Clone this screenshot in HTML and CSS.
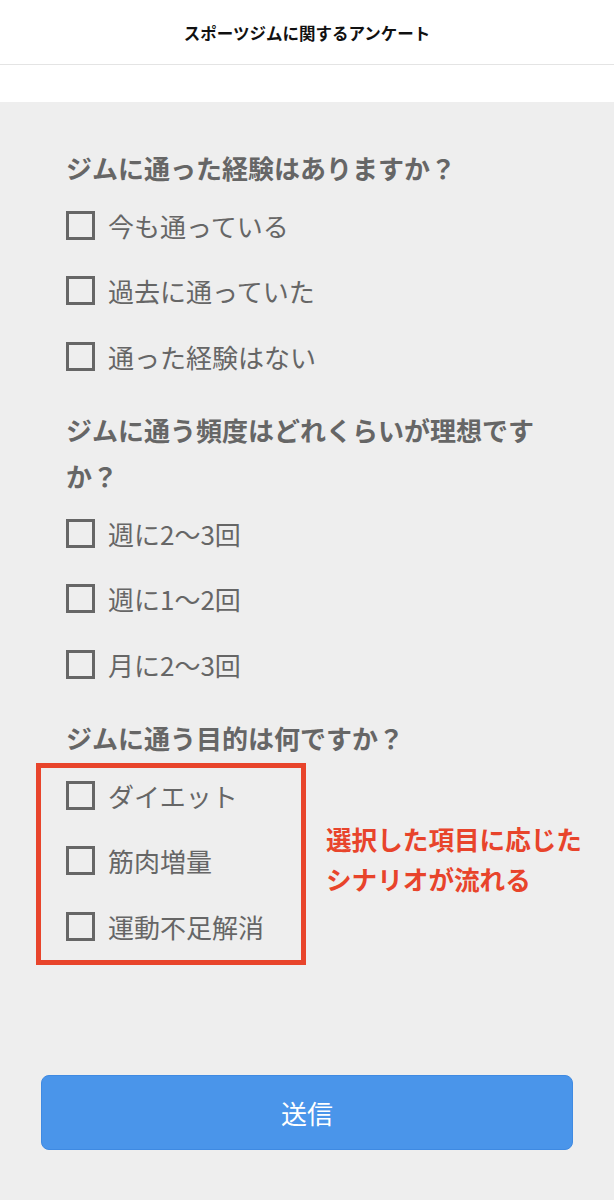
FILE: index.html
```html
<!DOCTYPE html>
<html lang="ja">
  <head>
    <meta charset="UTF-8" />
    <meta name="viewport" content="width=device-width, initial-scale=1.0" />
    <title>スポーツジムに関するアンケート</title>
    <link rel="stylesheet" href="styles.css">
  </head>

  <body>
    <div class="header">スポーツジムに関するアンケート</div>
    <div class="spacer"></div>

    <form class="survey">
      <div class="question">
        <p class="label">ジムに通った経験はありますか？</p>
        <div class="options">
          <label class="option"><input type="checkbox"><span class="box"></span>今も通っている</label>
          <label class="option"><input type="checkbox"><span class="box"></span>過去に通っていた</label>
          <label class="option"><input type="checkbox"><span class="box"></span>通った経験はない</label>
        </div>
      </div>

      <div class="question">
        <p class="label">ジムに通う頻度はどれくらいが理想ですか？</p>
        <div class="options">
          <label class="option"><input type="checkbox"><span class="box"></span>週に2〜3回</label>
          <label class="option"><input type="checkbox"><span class="box"></span>週に1〜2回</label>
          <label class="option"><input type="checkbox"><span class="box"></span>月に2〜3回</label>
        </div>
      </div>

      <div class="question">
        <p class="label">ジムに通う目的は何ですか？</p>
        <div class="options highlight">
          <label class="option"><input type="checkbox"><span class="box"></span>ダイエット</label>
          <label class="option"><input type="checkbox"><span class="box"></span>筋肉増量</label>
          <label class="option"><input type="checkbox"><span class="box"></span>運動不足解消</label>
          <div class="note">選択した項目に応じた<br>シナリオが流れる</div>
        </div>
      </div>

      <div class="actions">
        <button type="button" class="submit">送信</button>
      </div>
    </form>
  </body>
</html>
```

FILE: styles.css
```css
body {
  margin: 0;
  background: #eeeeee;
  font-family: "Noto Sans CJK JP", "Noto Sans", sans-serif;
  color: #666666;
}

.header {
  height: 64px;
  line-height: 66px;
  background: white;
  border-bottom: 1px solid #e4e4e4;
  text-align: center;
  font-size: 16.5px;
  font-weight: bold;
  color: #111111;
}

.spacer {
  height: 37px;
  background: white;
}

.survey {
  padding: 15px 66px 50px;
}

.question {
  margin-top: 28px;
}

.label {
  margin: 0 0 11px;
  font-size: 26px;
  line-height: 46px;
  font-weight: bold;
}

.options {
  display: flex;
  flex-direction: column;
  gap: 19.5px;
}

.option {
  display: flex;
  align-items: center;
  height: 46px;
  font-size: 26px;
}

.option input {
  display: none;
}

.box {
  width: 23px;
  height: 23px;
  border: 3px solid #666666;
  margin-right: 13px;
}

.highlight {
  position: relative;
}

.highlight::before {
  content: "";
  position: absolute;
  left: -30px;
  top: -9px;
  width: 260px;
  height: 192px;
  border: 5px solid #e8442b;
}

.note {
  position: absolute;
  left: 260px;
  top: 47px;
  font-size: 25.6px;
  line-height: 40px;
  font-weight: bold;
  color: #e8442b;
  white-space: nowrap;
}

.actions {
  margin: 126px -25px 0;
}

.submit {
  display: block;
  width: 100%;
  height: 75px;
  background: #4a95ea;
  border: 1px solid #3f8ae2;
  border-radius: 8px;
  color: white;
  font-family: inherit;
  font-size: 26px;
}
```
